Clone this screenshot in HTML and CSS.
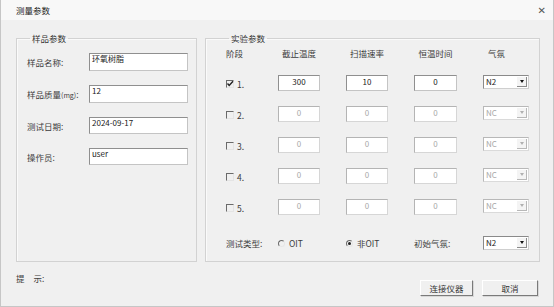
FILE: index.html
```html
<!DOCTYPE html>
<html lang="zh">
<head>
<meta charset="utf-8">
<title>测量参数</title>
<link rel="stylesheet" href="styles.css">
</head>
<body>
<div class="window">
  <div class="titlebar">
    <span class="title">测量参数</span>
    <span class="close">✕</span>
  </div>
  <div class="content">
    <div class="groups">
      <fieldset class="group group-sample">
        <legend>样品参数</legend>
        <div class="form-row"><span class="label">样品名称:</span><div class="edit tall">环氧树脂</div></div>
        <div class="form-row"><span class="label">样品质量<small>(mg)</small>:</span><div class="edit tall">12</div></div>
        <div class="form-row"><span class="label">测试日期:</span><div class="edit">2024-09-17</div></div>
        <div class="form-row"><span class="label">操作员:</span><div class="edit">user</div></div>
      </fieldset>
      <fieldset class="group group-exp">
        <legend>实验参数</legend>
        <div class="grid">
          <span class="head head-left">阶段</span>
          <span class="head">截止温度</span>
          <span class="head">扫描速率</span>
          <span class="head">恒温时间</span>
          <span class="head head-gas">气氛</span>

          <span class="stage"><span class="chk"><svg width="8" height="8" viewBox="0 0 8 8"><polyline points="1.5,3.5 3.2,5.5 7,1.2" fill="none" stroke="#222" stroke-width="1.4"/></svg></span>1.</span>
          <div class="edit num">300</div>
          <div class="edit num">10</div>
          <div class="edit num">0</div>
          <div class="combo"><span class="combo-text">N2</span><span class="combo-btn"><span class="tri"></span></span></div>

          <span class="stage"><span class="chk"></span>2.</span>
          <div class="edit num disabled">0</div>
          <div class="edit num disabled">0</div>
          <div class="edit num disabled">0</div>
          <div class="combo disabled"><span class="combo-text">NC</span><span class="combo-btn"><span class="tri"></span></span></div>

          <span class="stage"><span class="chk"></span>3.</span>
          <div class="edit num disabled">0</div>
          <div class="edit num disabled">0</div>
          <div class="edit num disabled">0</div>
          <div class="combo disabled"><span class="combo-text">NC</span><span class="combo-btn"><span class="tri"></span></span></div>

          <span class="stage"><span class="chk"></span>4.</span>
          <div class="edit num disabled">0</div>
          <div class="edit num disabled">0</div>
          <div class="edit num disabled">0</div>
          <div class="combo disabled"><span class="combo-text">NC</span><span class="combo-btn"><span class="tri"></span></span></div>

          <span class="stage"><span class="chk"></span>5.</span>
          <div class="edit num disabled">0</div>
          <div class="edit num disabled">0</div>
          <div class="edit num disabled">0</div>
          <div class="combo disabled"><span class="combo-text">NC</span><span class="combo-btn"><span class="tri"></span></span></div>

          <span class="last type-label">测试类型:</span>
          <span class="last radio-item"><span class="radio"></span>OIT</span>
          <span class="last radio-item"><span class="radio on"></span>非OIT</span>
          <span class="last type-label">初始气氛:</span>
          <div class="last combo"><span class="combo-text">N2</span><span class="combo-btn"><span class="tri"></span></span></div>
        </div>
      </fieldset>
    </div>
    <div class="footer">
      <span class="hint"><span>提</span><span>示:</span></span>
      <div class="buttons">
        <button class="btn btn-connect">连接仪器</button>
        <button class="btn btn-cancel">取消</button>
      </div>
    </div>
  </div>
</div>
</body>
</html>
```
FILE: styles.css
```css
html, body {
  margin: 0;
  padding: 0;
  background: #f0f0f0;
}

.window {
  width: 554px;
  height: 307px;
  box-sizing: border-box;
  background: #f0f0f0;
  border-left: 1px solid #c6c6c6;
  border-right: 1px solid #c6c6c6;
  border-bottom: 1px solid #c6c6c6;
  font-family: "Noto Sans CJK SC", "Noto Sans", sans-serif;
  font-size: 8.5px;
  color: #3c3c3c;
  overflow: hidden;
}

.titlebar {
  height: 20px;
  display: flex;
  align-items: center;
  justify-content: space-between;
  padding: 0 7px 0 15px;
  background: #f8f8f8;
}

.title {
  font-size: 8.5px;
  color: #222;
}

.close {
  font-size: 10px;
  color: #555;
  font-family: "DejaVu Sans", sans-serif;
}

.content {
  padding: 0 13px 0 15px;
}

.groups {
  display: flex;
  gap: 8px;
  margin-top: 12px;
}

.group {
  margin: 0;
  box-sizing: border-box;
  height: 230px;
  border: 1px solid #d2d2d2;
  box-shadow: inset 1px 1px 0 #fafafa;
  min-width: 0;
}

.group legend {
  padding: 0 2px;
  margin-left: 3px;
  line-height: 12px;
  font-size: 8.5px;
  color: #333;
}

.group-sample {
  width: 181px;
  padding: 9px 8px 0 10px;
  display: flex;
  flex-direction: column;
  gap: 14px;
}

.form-row {
  display: flex;
  align-items: center;
}

.label {
  width: 62px;
  flex: none;
  white-space: nowrap;
}

.label small {
  font-size: 7px;
}

.edit {
  box-sizing: border-box;
  height: 16px;
  background: #fff;
  border: 1px solid #8f8f8f;
  border-right-color: #c4c4c4;
  border-bottom-color: #c4c4c4;
  padding: 0 3px;
  line-height: 11px;
  color: #222;
  font-size: 8px;
  white-space: nowrap;
  overflow: hidden;
}

.form-row .edit {
  width: 99px;
  height: 17px;
  line-height: 10px;
  padding-left: 2px;
}

.form-row .edit.tall {
  height: 18px;
}

.group-exp {
  width: 335px;
  padding: 3px 0 0 20px;
}

.grid {
  display: grid;
  grid-template-columns: 26px 42px 42px 43px 46px;
  grid-template-rows: 13px repeat(5, 16px) 20px;
  column-gap: 26px;
  row-gap: 15px;
  align-items: start;
}

.head {
  text-align: center;
  line-height: 13px;
  white-space: nowrap;
}

.head-left {
  text-align: left;
}

.head-gas {
  text-align: left;
  padding-left: 5px;
}

.stage {
  display: flex;
  align-items: center;
  gap: 3px;
  height: 16px;
  padding-top: 2px;
  box-sizing: border-box;
  white-space: nowrap;
}

.chk {
  width: 8px;
  height: 8px;
  box-sizing: border-box;
  border-top: 1px solid #6a6a6a;
  border-left: 1px solid #6a6a6a;
  border-right: 1px solid #e4e4e4;
  border-bottom: 1px solid #e4e4e4;
  display: flex;
  align-items: center;
  justify-content: center;
}

.chk svg {
  display: block;
  flex: none;
}

.num {
  text-align: center;
  line-height: 11px;
}

.edit.disabled {
  border-color: #b4b4b4;
  border-right-color: #d6d6d6;
  border-bottom-color: #d6d6d6;
  color: #a8a8a8;
}

.combo {
  box-sizing: border-box;
  height: 14px;
  display: flex;
  background: #fff;
  border: 1px solid #8a8a8a;
  border-right-color: #cfcfcf;
  border-bottom-color: #cfcfcf;
}

.combo-text {
  flex: 1;
  padding-left: 2px;
  line-height: 11px;
  font-size: 8px;
  color: #222;
}

.combo-btn {
  width: 10px;
  margin: 1px;
  box-sizing: border-box;
  background: #f4f4f4;
  border-right: 1px solid #8a8a8a;
  border-bottom: 1px solid #8a8a8a;
  display: flex;
  align-items: center;
  justify-content: center;
}

.tri {
  width: 0;
  height: 0;
  border-left: 2.5px solid transparent;
  border-right: 2.5px solid transparent;
  border-top: 3px solid #111;
}

.combo.disabled {
  border-color: #b8b8b8;
  border-right-color: #dadada;
  border-bottom-color: #dadada;
}

.combo.disabled .combo-text {
  color: #a8a8a8;
}

.combo.disabled .combo-btn {
  border-color: #b8b8b8;
}

.combo.disabled .tri {
  border-top-color: #b0b0b0;
}

.last {
  align-self: end;
}

.type-label {
  white-space: nowrap;
  line-height: 13px;
}

.radio-item {
  display: flex;
  align-items: center;
  gap: 4px;
  line-height: 13px;
  white-space: nowrap;
}

.radio {
  width: 7px;
  height: 7px;
  box-sizing: border-box;
  border-radius: 50%;
  border: 1px solid #e6e6e6;
  border-top-color: #6a6a6a;
  border-left-color: #6a6a6a;
  display: flex;
  align-items: center;
  justify-content: center;
}

.radio.on::after {
  content: "";
  width: 3px;
  height: 3px;
  border-radius: 50%;
  background: #222;
}

.footer {
  display: flex;
  justify-content: space-between;
  align-items: flex-start;
  margin-top: 10px;
}

.hint {
  display: flex;
  gap: 9px;
  line-height: 12px;
}

.buttons {
  display: flex;
  gap: 9px;
  margin-top: 8px;
  margin-right: 2px;
}

.btn {
  box-sizing: border-box;
  height: 16px;
  padding: 0;
  font-family: "Noto Sans CJK SC", "Noto Sans", sans-serif;
  font-size: 8.5px;
  color: #333;
  background: #f0f0f0;
  border: 1px solid #fff;
  border-right-color: #7a7a7a;
  border-bottom-color: #7a7a7a;
  box-shadow: 1px 1px 0 #d8d8d8;
}

.btn-connect {
  width: 53px;
}

.btn-cancel {
  width: 56px;
}
```
